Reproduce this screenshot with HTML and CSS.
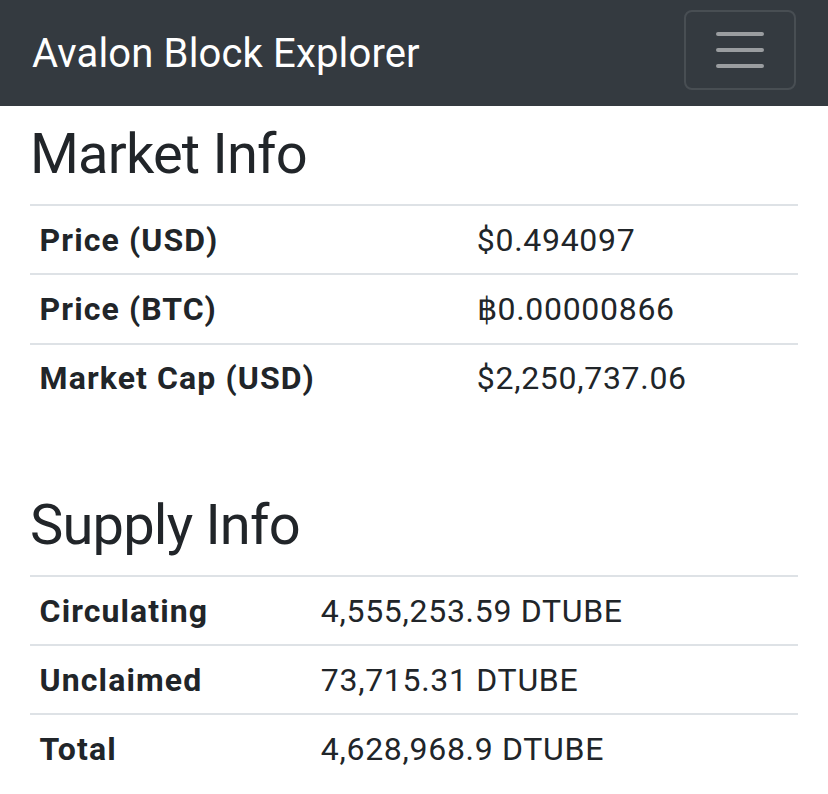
FILE: index.html
```html
<!DOCTYPE html>
<html lang="en">
<head>
<meta charset="UTF-8">
<meta name="viewport" content="width=device-width, initial-scale=1.0">
<title>Avalon Block Explorer</title>
<link rel="stylesheet" href="styles.css">
</head>
<body>
  <nav class="navbar">
    <a class="brand" href="#">Avalon Block Explorer</a>
    <button class="toggler" type="button">
      <svg class="toggler-icon" viewBox="0 0 30 30" width="60" height="60">
        <path d="M4 7h22M4 15h22M4 23h22" stroke="rgba(255,255,255,0.5)" stroke-width="2" stroke-linecap="round" fill="none"/>
      </svg>
    </button>
  </nav>

  <div class="container">
    <!-- Market info -->
    <h2 class="title">Market Info</h2>
    <table class="info market">
      <tr><th>Price (USD)</th><td>$0.494097</td></tr>
      <tr><th>Price (BTC)</th><td>&#3647;0.00000866</td></tr>
      <tr><th>Market Cap (USD)</th><td>$2,250,737.06</td></tr>
    </table>

    <!-- Supply info -->
    <h2 class="title spaced">Supply Info</h2>
    <table class="info supply">
      <tr><th>Circulating</th><td>4,555,253.59 DTUBE</td></tr>
      <tr><th>Unclaimed</th><td>73,715.31 DTUBE</td></tr>
      <tr><th>Total</th><td>4,628,968.9 DTUBE</td></tr>
    </table>
  </div>
</body>
</html>
```

FILE: styles.css
```css
/* Page base */
body {
  margin: 0;
  font-family: Roboto, "Liberation Sans", sans-serif;
  color: #212529;
  background-color: #fff;
}

/* Dark top bar */
.navbar {
  display: flex;
  align-items: center;
  justify-content: space-between;
  height: 106px;
  box-sizing: border-box;
  padding: 10px 32px 16px 32px;
  background-color: #343a40;
}

.brand {
  color: #fff;
  font-size: 40px;
  letter-spacing: 0.15px;
  text-decoration: none;
  margin-top: 6px;
}

.toggler {
  display: flex;
  padding: 8px 24px;
  background: transparent;
  border: 2px solid rgba(255, 255, 255, 0.1);
  border-radius: 8px;
}

.toggler-icon {
  display: block;
}

/* Content */
.container {
  padding: 0 30px;
}

.title {
  font-size: 56px;
  font-weight: 400;
  line-height: 1.2;
  letter-spacing: -0.8px;
  margin: 15px 0 16px 0;
}

.title.spaced {
  margin-top: 80px;
}

.info {
  width: 100%;
  border-collapse: collapse;
  font-size: 32px;
  line-height: 48px;
}

.info th,
.info td {
  padding: 9.6px;
  border-top: 2px solid #dee2e6;
  text-align: left;
  vertical-align: top;
}

.info th {
  font-weight: 700;
  letter-spacing: 1.1px;
}

.info td {
  letter-spacing: 0.7px;
}

.market th {
  width: 418px;
}

.supply th {
  width: 262px;
}
```
